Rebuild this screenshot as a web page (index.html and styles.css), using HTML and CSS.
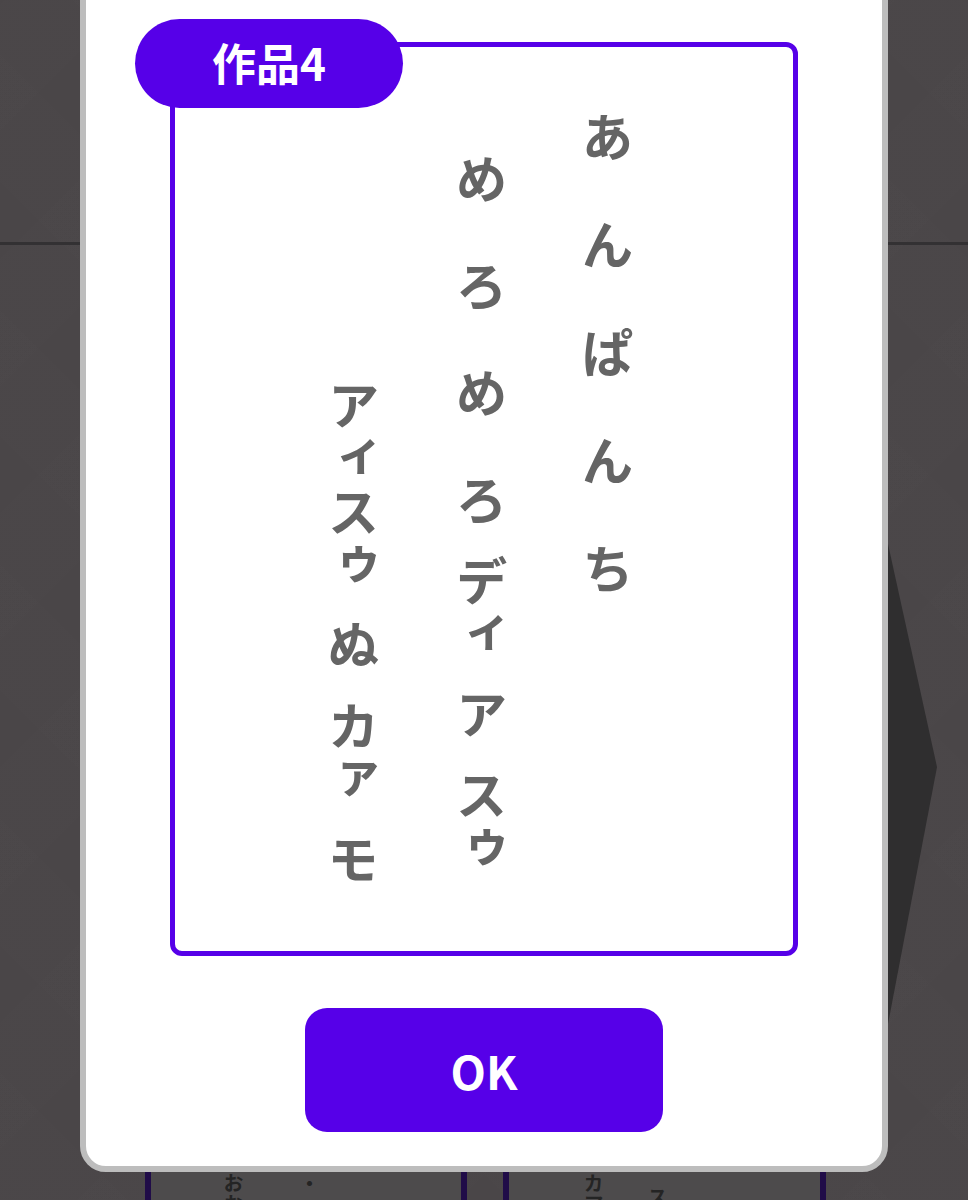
FILE: index.html
```html
<!DOCTYPE html>
<html lang="ja">
<head>
<meta charset="utf-8">
<title>作品4</title>
<link rel="stylesheet" href="styles.css">
</head>
<body>
<div class="app">
  <header class="topbar"></header>
  <main class="stage">
    <div class="cards">
      <section class="card card-a">
        <div class="card-cols">
          <p class="card-col">おお</p>
          <p class="card-col">・</p>
        </div>
      </section>
      <section class="card card-b">
        <div class="card-cols">
          <p class="card-col">カア</p>
          <p class="card-col card-col-low">ス</p>
        </div>
      </section>
    </div>
    <svg class="next-arrow" width="60" height="520" viewBox="0 0 60 520" aria-hidden="true">
      <polygon points="0,0 49,223 0,480" fill="#2f2e2f"/>
    </svg>
  </main>
</div>

<div class="overlay">
  <div class="modal">
    <div class="work-frame">
      <div class="work-label">作品4</div>
      <div class="poem">
        <div class="poem-line line-1">
          <span class="mora">あ</span>
          <span class="mora">ん</span>
          <span class="mora">ぱ</span>
          <span class="mora">ん</span>
          <span class="mora">ち</span>
        </div>
        <div class="poem-line line-2">
          <span class="mora">め</span>
          <span class="mora">ろ</span>
          <span class="mora">め</span>
          <span class="mora">ろ</span>
          <span class="mora">ディ</span>
          <span class="mora">ア</span>
          <span class="mora">スゥ</span>
        </div>
        <div class="poem-line line-3">
          <span class="mora">アィ</span>
          <span class="mora">スゥ</span>
          <span class="mora">ぬ</span>
          <span class="mora">カァ</span>
          <span class="mora">モ</span>
        </div>
      </div>
    </div>
    <button class="ok-button" type="button">OK</button>
  </div>
</div>
</body>
</html>
```
FILE: styles.css
```css
* {
  box-sizing: border-box;
}

html, body {
  margin: 0;
  padding: 0;
  height: 1200px;
  overflow: hidden;
}

body {
  background-color: #4a4648;
  font-family: "Noto Sans CJK JP", "Noto Sans", sans-serif;
}

.app {
  position: relative;
  height: 1200px;
  overflow: hidden;
  background-color: #4a4648;
  background-image:
    repeating-linear-gradient(45deg, rgba(255,255,255,0.005) 0 90px, rgba(0,0,0,0.005) 90px 180px),
    repeating-linear-gradient(-45deg, rgba(255,255,255,0.005) 0 90px, rgba(0,0,0,0.005) 90px 180px);
}

.topbar {
  height: 245px;
  border-bottom: 3px solid #333133;
}

.stage {
  position: relative;
  height: 955px;
  padding-top: 898px;
}

.cards {
  display: grid;
  grid-template-columns: 322px 323px;
  column-gap: 36px;
  justify-content: center;
  padding-left: 3px;
}

.card {
  height: 200px;
  background: #4d4b4c;
  border: 6px solid #200c48;
  border-radius: 10px;
}

.card-cols {
  display: flex;
  flex-direction: row;
  padding-top: 24px;
  gap: 52px;
}

.card-a .card-cols {
  padding-left: 70px;
}

.card-b .card-cols {
  padding-left: 72px;
  gap: 40px;
}

.card-col {
  margin: 0;
  writing-mode: vertical-rl;
  font-size: 20px;
  line-height: 24px;
  font-weight: 700;
  color: #242424;
  letter-spacing: 1px;
}

.card-col-low {
  padding-top: 14px;
}

.next-arrow {
  position: absolute;
  right: 20px;
  top: 299px;
}

/* modal */
.overlay {
  position: absolute;
  inset: 0;
}

.modal {
  position: absolute;
  left: 80px;
  top: -30px;
  width: 808px;
  height: 1202px;
  background: #ffffff;
  border: 6px solid #bdbdbd;
  border-radius: 26px;
  display: flex;
  flex-direction: column;
  align-items: center;
  padding-top: 66px;
  padding-bottom: 34px;
}

.work-frame {
  position: relative;
  width: 628px;
  height: 914px;
  border: 5px solid #5600e8;
  border-radius: 12px;
}

.work-label {
  position: absolute;
  left: -40px;
  top: -28px;
  width: 268px;
  height: 89px;
  border-radius: 45px;
  background: #5600e8;
  color: #ffffff;
  font-size: 44px;
  font-weight: 700;
  line-height: 87px;
  text-align: center;
}

.poem {
  display: flex;
  flex-direction: row-reverse;
  justify-content: center;
  padding-right: 8px;
  height: 100%;
}

.poem-line {
  display: flex;
  flex-direction: column;
  align-items: center;
  width: 126px;
}

.line-1 { padding-top: 36px; }
.line-2 { padding-top: 78px; }
.line-3 { padding-top: 330px; }

.line-3 {
  margin-right: 2px;
}

.mora {
  height: 107px;
  display: flex;
  justify-content: center;
  align-items: center;
  writing-mode: vertical-rl;
  font-size: 52px;
  line-height: 1;
  font-weight: 700;
  color: #656565;
}

.line-1 .mora {
  height: 108px;
}

.ok-button {
  margin-top: 52px;
  width: 358px;
  height: 124px;
  border: none;
  border-radius: 22px;
  background: #5600e8;
  color: #ffffff;
  font-family: "Noto Sans CJK JP", "Noto Sans", sans-serif;
  font-size: 46px;
  font-weight: 700;
  padding: 0;
}
```
